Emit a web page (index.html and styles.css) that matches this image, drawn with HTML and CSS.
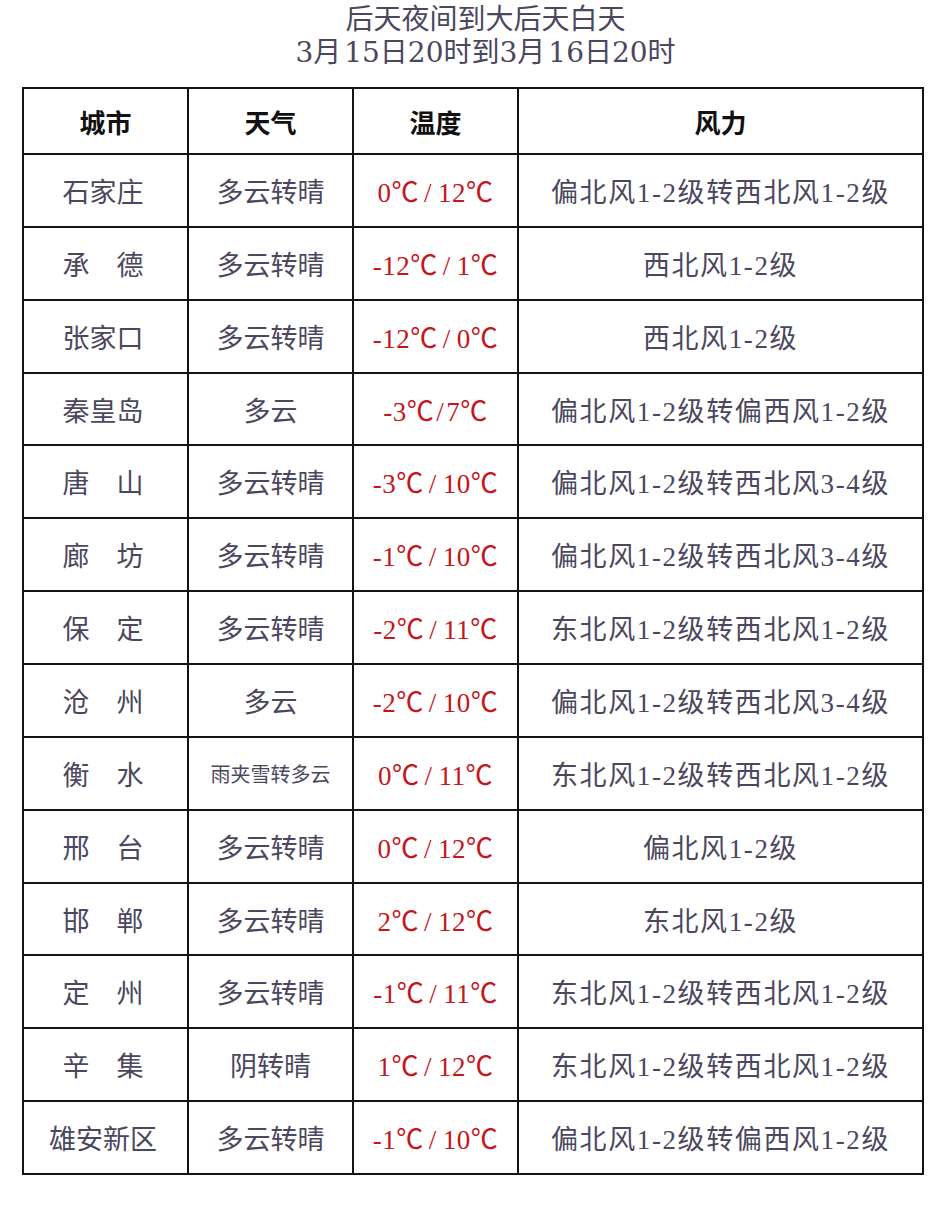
FILE: index.html
```html
<!DOCTYPE html>
<html lang="zh-CN">
<head>
<meta charset="utf-8">
<title>后天夜间到大后天白天</title>
<link rel="stylesheet" href="styles.css">
</head>
<body>
<div class="page">
  <div class="title">后天夜间到大后天白天<br>3月<span class="gap"></span>15日20时到3月<span class="gap"></span>16日20时</div>
  <table class="weather">
    <colgroup>
      <col class="c-city"><col class="c-wx"><col class="c-temp"><col class="c-wind">
    </colgroup>
    <thead>
      <tr><th>城市</th><th>天气</th><th>温度</th><th>风力</th></tr>
    </thead>
    <tbody>
      <tr><td class="city">石家庄</td><td>多云转晴</td><td class="t">0℃<span class="sl">/</span>12℃</td><td class="w">偏北风1-2级转西北风1-2级</td></tr>
      <tr><td class="city">承　德</td><td>多云转晴</td><td class="t">-12℃<span class="sl">/</span>1℃</td><td class="w">西北风1-2级</td></tr>
      <tr><td class="city">张家口</td><td>多云转晴</td><td class="t">-12℃<span class="sl">/</span>0℃</td><td class="w">西北风1-2级</td></tr>
      <tr><td class="city">秦皇岛</td><td>多云</td><td class="t">-3℃<span class="sl tight">/</span>7℃</td><td class="w">偏北风1-2级转偏西风1-2级</td></tr>
      <tr><td class="city">唐　山</td><td>多云转晴</td><td class="t">-3℃<span class="sl">/</span>10℃</td><td class="w">偏北风1-2级转西北风3-4级</td></tr>
      <tr><td class="city">廊　坊</td><td>多云转晴</td><td class="t">-1℃<span class="sl">/</span>10℃</td><td class="w">偏北风1-2级转西北风3-4级</td></tr>
      <tr><td class="city">保　定</td><td>多云转晴</td><td class="t">-2℃<span class="sl">/</span>11℃</td><td class="w">东北风1-2级转西北风1-2级</td></tr>
      <tr><td class="city">沧　州</td><td>多云</td><td class="t">-2℃<span class="sl">/</span>10℃</td><td class="w">偏北风1-2级转西北风3-4级</td></tr>
      <tr><td class="city">衡　水</td><td class="small">雨夹雪转多云</td><td class="t">0℃<span class="sl">/</span>11℃</td><td class="w">东北风1-2级转西北风1-2级</td></tr>
      <tr><td class="city">邢　台</td><td>多云转晴</td><td class="t">0℃<span class="sl">/</span>12℃</td><td class="w">偏北风1-2级</td></tr>
      <tr><td class="city">邯　郸</td><td>多云转晴</td><td class="t">2℃<span class="sl">/</span>12℃</td><td class="w">东北风1-2级</td></tr>
      <tr><td class="city">定　州</td><td>多云转晴</td><td class="t">-1℃<span class="sl">/</span>11℃</td><td class="w">东北风1-2级转西北风1-2级</td></tr>
      <tr><td class="city">辛　集</td><td>阴转晴</td><td class="t">1℃<span class="sl">/</span>12℃</td><td class="w">东北风1-2级转西北风1-2级</td></tr>
      <tr><td class="city">雄安新区</td><td>多云转晴</td><td class="t">-1℃<span class="sl">/</span>10℃</td><td class="w">偏北风1-2级转偏西风1-2级</td></tr>
    </tbody>
  </table>
</div>
</body>
</html>
```
FILE: styles.css
```css
html, body {
  margin: 0;
  padding: 0;
  background: #ffffff;
}
body {
  font-family: "Liberation Serif", "Noto Sans CJK SC", serif;
  color: #4b475e;
}
.page {
  padding: 3px 20px 0 22px;
}
.title {
  text-align: center;
  font-family: "DejaVu Serif", "Noto Sans CJK SC", serif;
  font-size: 28px;
  line-height: 33px;
  color: #4b475e;
  padding-left: 27px;
  margin-bottom: 18px;
}
.title .gap {
  display: inline-block;
  width: 3px;
}
.weather {
  width: 900px;
  border-collapse: collapse;
  table-layout: fixed;
}
.c-city, .c-wx, .c-temp { width: 165px; }
.c-wind { width: 405px; }
.weather th, .weather td {
  border: 2px solid #141414;
  text-align: center;
  vertical-align: middle;
  padding: 0;
  white-space: nowrap;
}
.weather th {
  height: 64px;
  font-size: 26px;
  font-weight: bold;
  color: #111111;
}
.weather td {
  height: 70.86px;
  font-size: 27px;
}
.weather td.city {
  padding-right: 5px;
}
.weather td.t {
  color: #c4161c;
  letter-spacing: 0.5px;
}
.weather td.t .sl {
  display: inline-block;
  padding: 0 6px 0 5px;
}
.weather td.t .sl.tight {
  padding: 0 2px;
}
.weather td.w {
  letter-spacing: 1.6px;
}
.weather td.small {
  font-size: 20px;
}
```
